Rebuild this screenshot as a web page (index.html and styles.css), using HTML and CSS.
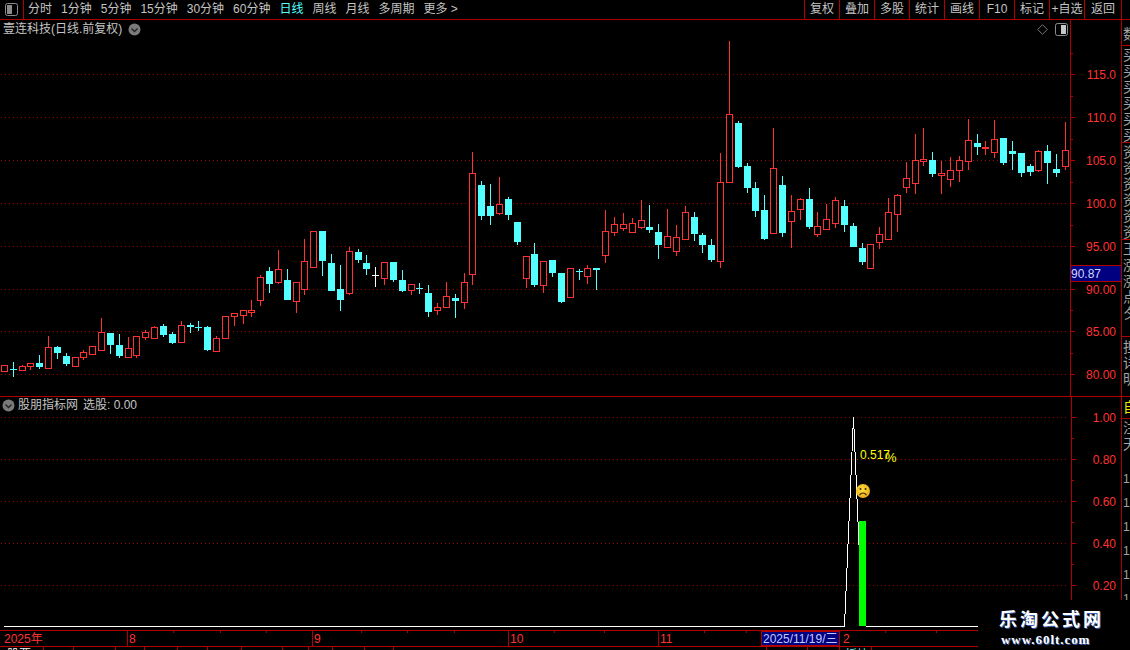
FILE: index.html
```html
<!DOCTYPE html>
<html lang="zh-CN">
<head>
<meta charset="utf-8">
<title>壹连科技 日线</title>
<link rel="stylesheet" href="styles.css">
</head>
<body>
<div class="app">
  <header class="toolbar">
    <div class="toggle-cell">
      <svg class="icon-toggle" width="13" height="13" viewBox="0 0 13 13"><rect x="0.5" y="0.5" width="12" height="12" rx="2" fill="none" stroke="#8c8c8c"/><rect x="2" y="2" width="5" height="9" fill="#8c8c8c"/></svg>
    </div>
    <nav class="periods">
      <span>分时</span><span>1分钟</span><span>5分钟</span><span>15分钟</span><span>30分钟</span><span>60分钟</span><span class="active">日线</span><span>周线</span><span>月线</span><span>多周期</span><span>更多 &gt;</span>
    </nav>
    <nav class="actions">
      <span>复权</span><span>叠加</span><span>多股</span><span>统计</span><span>画线</span><span>F10</span><span>标记</span><span>+自选</span><span>返回</span>
    </nav>
  </header>

  <div class="workspace">
    <main class="charts">
      <section class="panel panel-price">
        <div class="panel-title title-price">
          <span>壹连科技(日线.前复权)</span>
          <svg class="chevron" width="13" height="13" viewBox="0 0 13 13"><circle cx="6.5" cy="6.5" r="6" fill="#7a7a7a"/><path d="M3.5 5.5 6.5 8.5 9.5 5.5" fill="none" stroke="#222" stroke-width="1.4"/></svg>
        </div>
        <div class="panel-tools">
          <svg width="11" height="11" viewBox="0 0 11 11"><path d="M5.5 0.7 10.3 5.5 5.5 10.3 0.7 5.5Z" fill="none" stroke="#777"/></svg>
          <svg width="13" height="13" viewBox="0 0 13 13"><rect x="0.5" y="0.5" width="12" height="12" rx="2" fill="none" stroke="#8c8c8c"/><rect x="6" y="2" width="5" height="9" fill="#c8c8c8"/></svg>
        </div>
        <svg id="price" class="plot" width="1121" height="376" viewBox="0 20 1121 376"></svg>
      </section>

      <section class="panel panel-indicator">
        <div class="panel-title title-indicator">
          <svg class="chevron" width="13" height="13" viewBox="0 0 13 13"><circle cx="6.5" cy="6.5" r="6" fill="#7a7a7a"/><path d="M3.5 5.5 6.5 8.5 9.5 5.5" fill="none" stroke="#222" stroke-width="1.4"/></svg>
          <span>股朋指标网</span>
          <span class="pick">选股: 0.00</span>
        </div>
        <svg id="indicator" class="plot" width="1121" height="233" viewBox="0 397 1121 233"></svg>
      </section>

      <section class="panel panel-time">
        <svg id="time" class="plot" width="1121" height="15" viewBox="0 631 1121 15"></svg>
      </section>

      <section class="panel panel-tabs">
        <svg class="plot" width="1121" height="3" viewBox="0 647 1121 3">
          <path class="sep" d="M43.5 647V650M73.5 647V650M115.5 647V650M144.5 647V650M177.5 647V650M207.5 647V650M241.5 647V650M282.5 647V650M308.5 647V650M332.5 647V650M364.5 647V650M393.5 647V650M766.5 647V650M807.5 647V650M839.5 647V650M871.5 647V650"/>
          <text class="tab-text" x="7" y="659">股票</text>
          <text class="tab-text" x="50" y="659">一</text>
          <text class="tab-text" x="826" y="659">一</text>
          <text class="tab-text tab-cyan" x="845" y="659">板块</text>
        </svg>
      </section>
    </main>

    <aside class="strip">
      <div class="strip-cell h25"><span>数</span></div>
      <div class="strip-cell h97"><span>买买买买买买</span></div>
      <div class="strip-cell h97"><span>资资资资资资</span></div>
      <div class="strip-cell h97"><span>王涨涨点夕</span></div>
      <div class="strip-cell h60"><span>担详明</span></div>
      <div class="strip-cell h22 yellow"><span>自</span></div>
      <div class="strip-cell h48"><span>注天</span></div>
      <div class="strip-cell"><span class="ones">111111</span></div>
    </aside>
  </div>

  <div class="logo">
    <div class="logo-name">乐淘公式网</div>
    <div class="logo-url">www.60lt.com</div>
  </div>
</div>
<script src="script.js"></script>
</body>
</html>
```
FILE: styles.css
```css
* { box-sizing: border-box; }
html, body { margin: 0; padding: 0; background: #000; }
body {
  font-family: "Liberation Sans", "Noto Sans CJK SC", sans-serif;
  font-size: 12px;
  color: #c4c4c4;
}
.app {
  position: relative;
  width: 1130px;
  height: 650px;
  overflow: hidden;
  display: flex;
  flex-direction: column;
  background: #000;
}

/* toolbar */
.toolbar {
  flex: none;
  height: 20px;
  display: flex;
  align-items: stretch;
  border-bottom: 1px solid #b00000;
  line-height: 19px;
}
.toggle-cell {
  width: 24px;
  display: flex;
  align-items: center;
  justify-content: center;
  border-right: 1px solid #b00000;
}
.icon-toggle { display: block; margin-left: -1px; }
.periods { display: flex; gap: 9px; padding-left: 4px; white-space: nowrap; }
.periods .active { color: #54ffff; }
.actions { margin-left: auto; display: flex; margin-right: 8px; }
.actions span {
  width: 35px;
  text-align: center;
  border-left: 1px solid #b00000;
  white-space: nowrap;
}
.actions span:last-child { width: 38px; border-right: 1px solid #b00000; }

/* layout */
.workspace { flex: 1; display: flex; min-height: 0; }
.charts {
  flex: none;
  width: 1122px;
  display: flex;
  flex-direction: column;
  border-right: 1px solid #b00000;
}
.panel { position: relative; flex: none; overflow: hidden; }
.panel-price { height: 377px; border-bottom: 1px solid #b00000; }
.panel-indicator { height: 234px; border-bottom: 1px solid #b00000; }
.panel-time { height: 16px; border-bottom: 1px solid #b00000; }
.panel-tabs { height: 3px; }
.plot { display: block; }

.panel-title {
  position: absolute;
  display: flex;
  align-items: center;
  white-space: nowrap;
  line-height: 17px;
}
.title-price { left: 3px; top: 1px; gap: 6px; }
.title-indicator { left: 2px; top: 0; gap: 3px; }
.title-indicator .pick { margin-left: 2px; }
.chevron { display: block; }
.panel-tools {
  position: absolute;
  top: 3px;
  left: 1037px;
  display: flex;
  align-items: center;
  gap: 7px;
}
.panel-tools svg { display: block; }

/* svg parts */
.grid { stroke: #a00000; stroke-width: 1; stroke-dasharray: 1 3; fill: none; }
.axis { stroke: #b00000; stroke-width: 1; fill: none; shape-rendering: crispEdges; }
.sep { stroke: #b00000; stroke-width: 1; fill: none; shape-rendering: crispEdges; }
.axis-label { fill: #ff3232; font-size: 12px; text-anchor: end; }
.date-label { fill: #ff3232; font-size: 12px; }
.date-cursor { fill: #000080; stroke: #b00000; shape-rendering: crispEdges; }
.date-cursor-text { fill: #c0c8ff; font-size: 12px; }
.price-badge { fill: #000080; stroke: #b00000; shape-rendering: crispEdges; }
.price-badge-text { fill: #d0d8ff; font-size: 12px; }
.wick { stroke-width: 1; shape-rendering: crispEdges; }
.candle { shape-rendering: crispEdges; }
.up { stroke: #ff3232; fill: #000; }
.down { stroke: #54ffff; fill: #54ffff; }
.flat { stroke: #fff; fill: #fff; }
.base-line { stroke: #fff; fill: none; stroke-width: 1; shape-rendering: crispEdges; }
.signal-bar { fill: #00ff00; }
.note { fill: #ffff00; font-size: 12px; }
.note-pct { fill: #ffff00; font-size: 13px; }
.tab-text { fill: #fff; font-size: 12px; }
.tab-cyan { fill: #54ffff; }

/* right-hand clipped strip */
.strip { flex: 1; min-width: 0; overflow: hidden; display: flex; flex-direction: column; }
.strip-cell {
  flex: none;
  overflow: hidden;
  padding-left: 1px;
  border-bottom: 1px solid #b00000;
  font-size: 14px;
  line-height: 16px;
  color: #a4a4a4;
}
.strip-cell span { display: block; width: 14px; word-break: break-all; }
.strip-cell:last-child { border-bottom: 0; }
.h25 { height: 26px; padding-top: 6px; }
.h97 { height: 97px; padding-top: 1px; }
.h60 { height: 60px; padding-top: 2px; }
.h22 { height: 22px; padding-top: 2px; }
.h48 { height: 48px; padding-top: 1px; border-bottom: 0; }
.yellow { color: #e8e800; }
.strip-cell .ones { width: 7px; line-height: 24px; font-size: 12px; }

/* watermark */
.logo {
  position: absolute;
  left: 978px;
  top: 600px;
  width: 152px;
  height: 50px;
  background: #000;
  text-align: left;
}
.logo-name {
  margin: 9px 0 0 21px;
  font-family: "Liberation Serif", "Noto Sans CJK SC", serif;
  font-weight: 700;
  font-size: 18px;
  letter-spacing: 3px;
  line-height: 22px;
  color: #fff;
  text-shadow: 1px 1px 0 #3a5fb0;
  white-space: nowrap;
}
.logo-url {
  margin: 2px 0 0 23px;
  font-family: "Liberation Serif", serif;
  font-weight: 700;
  font-size: 13px;
  letter-spacing: 0.95px;
  line-height: 14px;
  color: #fff;
  text-shadow: 1px 1px 0 #3a5fb0;
  white-space: nowrap;
}
```
FILE: script.js
```js
// Candles are [x, high, top, bottom, low, kind], read at 3x scale relative to an origin.
var SETS = [
  { ox: 0, oy: 260, rows: [
    [13,316,316,332,332,'r'],[40,306,328,328,350,'c'],[67,314,319,329,330,'r'],[91,310,310,319,330,'r'],
    [118,285,309,321,327,'c'],[145,228,262,323,327,'r'],[172,258,261,279,297,'c'],[199,279,288,312,318,'c'],
    [226,291,292,317,317,'r'],[250,270,277,290,300,'r'],[277,259,259,281,281,'r'],[304,174,216,269,272,'r'],
    [331,219,219,255,282,'c'],[358,222,255,288,294,'c'],[385,231,264,290,293,'r'],[409,229,229,284,294,'r'],
    [436,210,217,230,240,'r'],[463,198,202,233,233,'r'],[490,192,198,225,231,'c'],[517,216,222,249,252,'c'],
    [544,183,195,245,245,'r'],[571,189,195,201,219,'c'],[595,183,201,203,213,'c'],[622,198,201,270,273,'c'],
    [649,228,234,272,272,'r'],[676,168,168,233,233,'r'],[703,160,160,167,198,'r'],[730,151,151,164,192,'r'],
    [754,120,151,155,171,'r'],[781,45,51,119,138,'r'],[808,21,33,72,99,'c'],[835,-30,27,65,72,'r'],
    [862,27,60,120,120,'c'],[889,66,66,122,159,'r']
  ]},
  { ox: 300, oy: 140, rows: [
    [13,297,364,446,465,'r'],[40,274,274,380,380,'r'],[67,273,273,363,408,'c'],[94,342,369,453,453,'c'],
    [121,375,447,480,513,'c'],[148,321,334,458,465,'r'],[175,327,336,360,369,'c'],[199,345,369,387,405,'c'],
    [226,381,406,408,441,'w'],[253,367,367,413,435,'r'],[280,366,366,420,426,'c'],[307,390,420,453,456,'c'],
    [334,431,431,449,465,'r'],[358,429,444,446,462,'c'],[385,435,459,516,531,'c'],[412,489,502,509,525,'r'],
    [439,426,469,500,500,'r'],[466,462,474,483,534,'c'],[493,399,427,485,507,'r'],[517,36,100,401,435,'r'],
    [544,123,135,228,240,'c'],[571,132,198,228,255,'c'],[598,111,193,218,225,'r'],[625,171,177,225,240,'c'],
    [652,246,246,306,315,'c'],[679,349,349,413,444,'r'],[703,309,342,435,441,'c'],[730,364,364,434,459,'r'],
    [757,360,360,399,411,'c'],[784,399,399,486,489,'c'],[811,385,385,470,470,'r'],[838,387,393,396,420,'c'],
    [862,375,385,407,432,'r'],[889,384,384,390,450,'c'],[916,210,274,344,369,'r'],[943,231,253,275,288,'r']
  ]},
  { ox: 600, oy: 30, rows: [
    [70,549,583,593,603,'r'],[97,564,580,605,605,'r'],[124,510,571,590,596,'r'],[148,525,591,600,609,'c'],
    [175,582,606,645,687,'c'],[202,537,619,650,650,'r'],[229,585,622,662,678,'r'],[256,528,547,626,626,'r'],
    [283,546,561,612,633,'c'],[307,609,615,645,669,'c'],[334,627,645,690,696,'c'],[361,369,457,692,714,'r'],
    [388,33,253,455,455,'r'],[415,273,279,411,414,'c'],[442,399,408,474,489,'c'],[466,456,474,543,561,'c'],
    [493,495,540,627,630,'c'],[520,294,415,608,608,'r'],[547,438,465,609,621,'c'],[574,495,544,572,654,'r'],
    [601,504,508,536,570,'r'],[628,474,507,591,597,'c'],[652,546,589,611,621,'r'],[679,522,568,596,600,'r'],
    [706,501,511,578,594,'r'],[733,510,528,585,606,'c'],[760,579,588,651,651,'c']
  ]},
  { ox: 840, oy: 110, rows: [
    [67,399,414,456,465,'c'],[91,403,403,473,473,'r'],[118,351,373,395,417,'r'],[145,264,307,386,386,'r'],
    [172,252,256,311,366,'r'],[199,156,205,230,249,'r'],[226,72,151,218,252,'r'],[250,54,148,152,168,'r'],
    [277,126,150,192,201,'c'],[304,153,189,194,252,'r'],[331,141,181,206,231,'r'],[358,138,151,179,216,'r'],
    [385,27,91,152,180,'r'],[412,72,99,111,135,'c'],[436,93,111,113,135,'r'],[463,30,88,125,144,'r'],
    [490,84,84,159,165,'c'],[517,93,123,132,180,'c'],[544,129,129,189,201,'c'],[571,162,168,186,198,'c'],
    [595,120,124,179,186,'r'],[622,105,123,159,222,'c'],[649,132,177,189,201,'c'],[676,36,121,167,180,'r']
  ]}
];

function candle(ox, oy, c) {
  var x = Math.floor(ox + c[0] / 3) + 0.5;
  var hi = Math.round(oy + c[1] / 3);
  var top = Math.round(oy + c[2] / 3);
  var bot = Math.round(oy + c[3] / 3);
  var lo = Math.round(oy + c[4] / 3);
  var cls = { r: 'up', c: 'down', w: 'flat' }[c[5]];
  var out = '';
  if (hi < top) out += '<path class="wick ' + cls + '" d="M' + x + ' ' + hi + 'V' + top + '"/>';
  if (lo > bot) out += '<path class="wick ' + cls + '" d="M' + x + ' ' + bot + 'V' + lo + '"/>';
  if (c[5] === 'r') {
    out += '<rect class="candle up" x="' + (x - 3) + '" y="' + (top + 0.5) + '" width="6" height="' + Math.max(bot - top, 0) + '"/>';
  } else {
    var h = Math.max(bot - top, 1);
    out += '<rect class="candle ' + cls + '" style="stroke:none" x="' + (x - 3.5) + '" y="' + top + '" width="7" height="' + h + '"/>';
  }
  return out;
}

function buildPrice() {
  var s = '';
  var labels = ['115.0', '110.0', '105.0', '100.0', '95.00', '90.00', '85.00', '80.00'];
  var axis = 'M1070.5 20V396';
  labels.forEach(function (t, i) {
    var y = Math.round(74 + 42.9 * i) + 0.5;
    s += '<path class="grid" d="M1 ' + y + 'H1068"/>';
    s += '<text class="axis-label" x="1116" y="' + (y + 4) + '">' + t + '</text>';
    axis += 'M1071 ' + y + 'H1075';
    axis += 'M1071 ' + (Math.round(y - 21.5) + 0.5) + 'H1073';
  });
  s += '<path class="axis" d="' + axis + '"/>';
  SETS.forEach(function (set) {
    set.rows.forEach(function (c) { s += candle(set.ox, set.oy, c); });
  });
  s += '<rect class="price-badge" x="1070.5" y="265.5" width="51" height="16"/>';
  s += '<text class="price-badge-text" x="1071" y="278">90.87</text>';
  document.getElementById('price').innerHTML = s;
}

function buildIndicator() {
  var s = '';
  var labels = ['1.00', '0.80', '0.60', '0.40', '0.20'];
  var axis = 'M1071.5 397V630';
  labels.forEach(function (t, i) {
    var y = 417.5 + 42 * i;
    s += '<path class="grid" d="M1 ' + y + 'H1068"/>';
    s += '<text class="axis-label" x="1116" y="' + (y + 4) + '">' + t + '</text>';
    axis += 'M1072 ' + y + 'H1076';
    axis += 'M1072 ' + (y + 21) + 'H1074';
  });
  s += '<path class="axis" d="' + axis + '"/>';
  s += '<path class="base-line" d="M4 626.5H845M866 626.5H978"/>';
  s += '<path class="base-line" d="M844.5 626L853.5 417L862.5 626"/>';
  s += '<rect class="signal-bar" x="859" y="521" width="7" height="105"/>';
  s += '<text class="note" x="860" y="459">0.517</text>';
  s += '<text class="note-pct" x="885" y="462">%</text>';
  s += '<defs><radialGradient id="face" cx="45%" cy="40%" r="65%"><stop offset="0" stop-color="#ffe040"/><stop offset="1" stop-color="#e8a810"/></radialGradient></defs>';
  s += '<circle cx="863" cy="491" r="7" fill="url(#face)"/>';
  s += '<circle cx="860.5" cy="489" r="1" fill="#3a2a00"/><circle cx="865.5" cy="489" r="1" fill="#3a2a00"/>';
  s += '<path d="M859.5 495Q863 491 866.5 495" fill="none" stroke="#3a2a00" stroke-width="1.2"/>';
  document.getElementById('indicator').innerHTML = s;
}

function buildTime() {
  var s = '';
  var major = [127, 312, 508, 658, 839];
  var minor = [173, 220, 266, 361, 407, 454, 554, 604, 704, 746, 885, 936];
  var d = '';
  major.forEach(function (x) { d += 'M' + (x + 0.5) + ' 631V646'; });
  minor.forEach(function (x) { d += 'M' + (x + 0.5) + ' 631V633'; });
  s += '<path class="axis" d="' + d + '"/>';
  [['2025年', 4], ['8', 129], ['9', 314], ['10', 510], ['11', 660], ['2', 843]].forEach(function (p) {
    s += '<text class="date-label" x="' + p[1] + '" y="643">' + p[0] + '</text>';
  });
  s += '<rect class="date-cursor" x="761.5" y="631.5" width="78" height="14"/>';
  s += '<text class="date-cursor-text" x="763" y="643">2025/11/19/三</text>';
  document.getElementById('time').innerHTML = s;
}

buildPrice();
buildIndicator();
buildTime();
```
